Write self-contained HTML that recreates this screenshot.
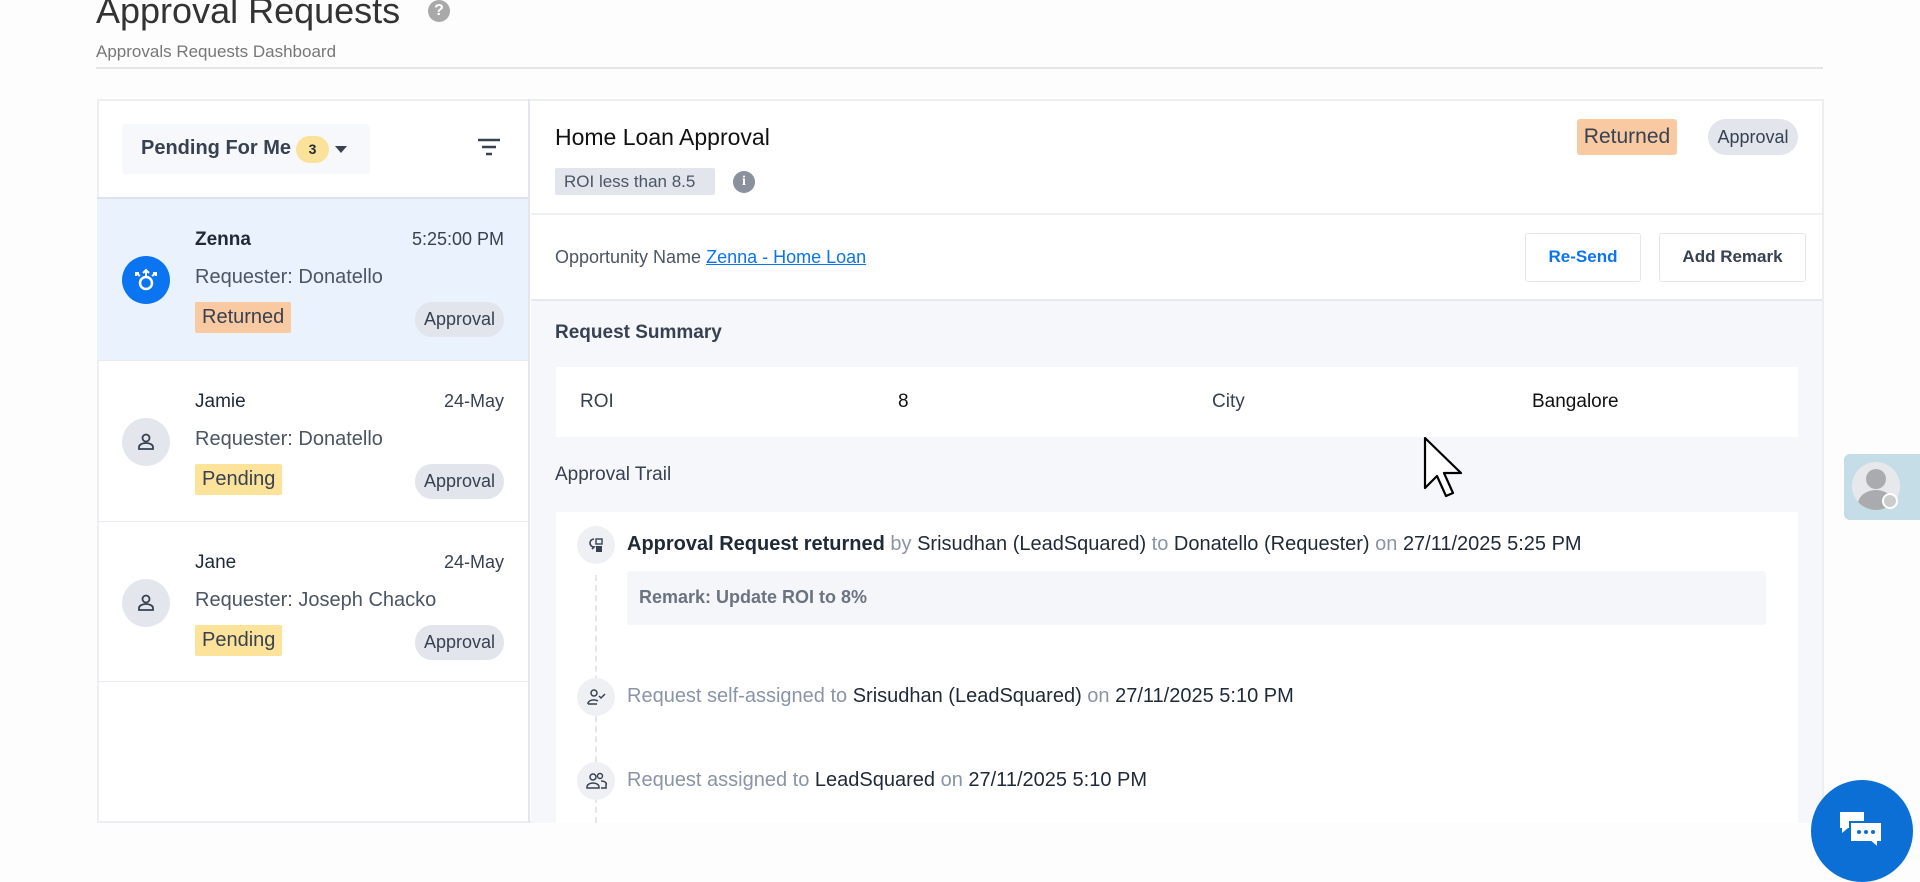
<!DOCTYPE html>
<html><head><meta charset="utf-8"><style>
*{box-sizing:border-box;margin:0;padding:0}
body{width:1920px;height:866px;overflow:hidden;background:#fdfdfd;font-family:"Liberation Sans",sans-serif;color:#1f2937;position:relative}
.a{position:absolute}
.title{left:96px;top:-10px;font-size:36px;color:#333}
.sub{left:96px;top:42px;font-size:17px;color:#777}
.sep{left:96px;top:67px;width:1727px;height:2px;background:#e6e6e6}
.panel{left:97px;top:99px;width:1727px;height:724px;border:2px solid #eceef2;background:#fff}
.left{left:97px;top:99px;width:433px;height:724px;border-right:2px solid #e3e6ec}
.item{position:absolute;left:0;width:431px;border-bottom:1px solid #e8eaee}
.av{position:absolute;left:25px;top:57px;width:48px;height:48px;border-radius:50%;background:#e3e6ec}
.nm{position:absolute;left:98px;top:30px;font-size:19px;color:#1f2937}
.tm{position:absolute;right:24px;top:30px;font-size:18px;color:#374151}
.rq{position:absolute;left:98px;top:67px;font-size:20px;color:#4b5563}
.st{position:absolute;left:98px;top:103px;font-size:20px;padding:4px 7px;border-radius:2px;color:#374151}
.ap{position:absolute;right:24px;top:103px;font-size:18px;padding:7px 9px;border-radius:17px;background:#e2e5ec;color:#374151}
.tl{position:absolute;left:577px;width:38px;height:38px;border-radius:50%;background:#eef0f4}
.tx{position:absolute;left:627px;font-size:20px;color:#8a94a6;white-space:nowrap}
.tx b{color:#1f2937;font-weight:normal}
</style></head><body>
<div class="a title">Approval Requests</div>
<div class="a" style="left:428px;top:0px;width:22px;height:22px;border-radius:50%;background:#a9a9a9;color:#fff;font-size:16px;font-weight:bold;text-align:center;line-height:22px">?</div>
<div class="a sub">Approvals Requests Dashboard</div>
<div class="a sep"></div>
<div class="a panel"></div>
<div class="a left">
 <div class="a" style="left:25px;top:25px;width:248px;height:50px;background:#f7f8fb;border-radius:3px"></div>
 <div class="a" style="left:44px;top:38px;font-size:20px;font-weight:bold;color:#374151">Pending For Me</div>
 <div class="a" style="left:199px;top:37px;width:33px;height:27px;border-radius:14px;background:#fbe29a;font-size:14px;font-weight:bold;text-align:center;line-height:27px">3</div>
 <div class="a" style="left:238px;top:47px;border-left:6px solid transparent;border-right:6px solid transparent;border-top:7px solid #374151"></div>
 <svg class="a" style="left:379px;top:38px" width="26" height="20"><path d="M2 3h22M6 10h14M10 17h6" stroke="#374151" stroke-width="2.4"/></svg>
 <div class="a" style="left:0;top:98px;width:431px;height:2px;background:#dfe3e9"></div>
 <div class="item" style="top:100px;height:162px;background:#eaf2fd">
  <div class="av" style="background:#0b74f0"><svg width="48" height="48"><circle cx="24" cy="27" r="6" stroke="#fff" stroke-width="2.5" fill="none"/><path d="M24 21v-7M21 17l3-3 3 3M18 20l-4-3M14 20v-3h3M30 20l4-3M34 20v-3h-3" stroke="#fff" stroke-width="2" fill="none"/></svg></div>
  <div class="nm" style="font-weight:bold">Zenna</div>
  <div class="tm">5:25:00 PM</div>
  <div class="rq">Requester: Donatello</div>
  <div class="st" style="background:#f9c9a2">Returned</div>
  <div class="ap">Approval</div>
 </div>
 <div class="item" style="top:262px;height:161px">
  <div class="av"><svg width="48" height="48"><circle cx="24" cy="20" r="3.5" stroke="#374151" stroke-width="1.8" fill="none"/><path d="M17 31v-2a7 4 0 0 1 14 0v2z" stroke="#374151" stroke-width="1.8" fill="none"/></svg></div>
  <div class="nm">Jamie</div>
  <div class="tm">24-May</div>
  <div class="rq">Requester: Donatello</div>
  <div class="st" style="background:#fde39a">Pending</div>
  <div class="ap">Approval</div>
 </div>
 <div class="item" style="top:423px;height:160px">
  <div class="av"><svg width="48" height="48"><circle cx="24" cy="20" r="3.5" stroke="#374151" stroke-width="1.8" fill="none"/><path d="M17 31v-2a7 4 0 0 1 14 0v2z" stroke="#374151" stroke-width="1.8" fill="none"/></svg></div>
  <div class="nm">Jane</div>
  <div class="tm">24-May</div>
  <div class="rq">Requester: Joseph Chacko</div>
  <div class="st" style="background:#fde39a">Pending</div>
  <div class="ap">Approval</div>
 </div>
</div>
<div class="a" style="left:555px;top:124px;font-size:23px;color:#111">Home Loan Approval</div>
<div class="a" style="left:555px;top:168px;width:160px;height:27px;background:#e2e5ec;border-radius:2px;font-size:17px;color:#4b5563;padding:4px 9px">ROI less than 8.5</div>
<div class="a" style="left:733px;top:171px;width:22px;height:22px;border-radius:50%;background:#8a919c;color:#fff;font-size:14px;font-weight:bold;text-align:center;line-height:22px;font-family:'Liberation Serif',serif">i</div>
<div class="a" style="left:1577px;top:119px;width:100px;height:36px;background:#f9c9a2;border-radius:3px;font-size:21px;color:#374151;text-align:center;line-height:36px">Returned</div>
<div class="a" style="left:1708px;top:119px;width:90px;height:36px;background:#e2e5ec;border-radius:18px;font-size:18px;color:#374151;text-align:center;line-height:36px">Approval</div>
<div class="a" style="left:531px;top:213px;width:1291px;height:2px;background:#eef0f4"></div>
<div class="a" style="left:555px;top:247px;font-size:18px;color:#4b5563">Opportunity Name <span style="color:#0b74f0;text-decoration:underline">Zenna - Home Loan</span></div>
<div class="a" style="left:1525px;top:233px;width:116px;height:49px;border:1.5px solid #e3e6ec;border-radius:3px;font-size:17px;font-weight:bold;color:#0b74f0;text-align:center;line-height:46px">Re-Send</div>
<div class="a" style="left:1659px;top:233px;width:147px;height:49px;border:1.5px solid #e3e6ec;border-radius:3px;font-size:17px;font-weight:bold;color:#374151;text-align:center;line-height:46px">Add Remark</div>
<div class="a" style="left:531px;top:299px;width:1291px;height:524px;background:#f6f7fb;border-top:2px solid #e6e8ed"></div>
<div class="a" style="left:555px;top:322px;font-size:19px;font-weight:bold;color:#374151">Request Summary</div>
<div class="a" style="left:556px;top:367px;width:1242px;height:70px;background:#fff"></div>
<div class="a" style="left:580px;top:391px;font-size:19px;color:#374151">ROI</div>
<div class="a" style="left:898px;top:391px;font-size:19px;color:#111">8</div>
<div class="a" style="left:1212px;top:391px;font-size:19px;color:#374151">City</div>
<div class="a" style="left:1532px;top:391px;font-size:19px;color:#111">Bangalore</div>
<div class="a" style="left:555px;top:464px;font-size:19px;color:#374151">Approval Trail</div>
<div class="a" style="left:556px;top:512px;width:1242px;height:311px;background:#fff"></div>
<div class="a" style="left:595px;top:575px;height:248px;border-left:2px dashed #e3e6ec"></div>
<div class="tl" style="top:526px"><svg width="38" height="38"><path d="M17 13a4 4 0 1 0 0 8l-2 2" stroke="#374151" stroke-width="1.6" fill="none"/><rect x="19" y="13" width="6" height="5" stroke="#374151" stroke-width="1.4" fill="none"/><rect x="19" y="20" width="6" height="6" fill="#374151"/></svg></div>
<div class="tx" style="top:533px"><b style="font-weight:bold">Approval Request returned</b> by <b>Srisudhan (LeadSquared)</b> to <b>Donatello (Requester)</b> on <b>27/11/2025 5:25 PM</b></div>
<div class="a" style="left:627px;top:571px;width:1139px;height:54px;background:#f5f6fa;border-radius:3px;font-size:18px;font-weight:bold;color:#6b7280;padding:16px 12px">Remark: Update ROI to 8%</div>
<div class="tl" style="top:678px"><svg width="38" height="38"><circle cx="17" cy="15" r="3" stroke="#374151" stroke-width="1.5" fill="none"/><path d="M11 26v-1a6 4 0 0 1 10-2M11 26h9M22 18l2 2 4-4" stroke="#374151" stroke-width="1.5" fill="none"/></svg></div>
<div class="tx" style="top:685px">Request self-assigned to <b>Srisudhan (LeadSquared)</b> on <b>27/11/2025 5:10 PM</b></div>
<div class="tl" style="top:762px"><svg width="38" height="38"><circle cx="16" cy="15" r="3" stroke="#374151" stroke-width="1.5" fill="none"/><circle cx="23" cy="14" r="2.5" stroke="#374151" stroke-width="1.4" fill="none"/><path d="M10 26v-1a6 4 0 0 1 12 0v1zM24 19a5 3 0 0 1 5 4v3h-5" stroke="#374151" stroke-width="1.5" fill="none"/></svg></div>
<div class="tx" style="top:769px">Request assigned to <b>LeadSquared</b> on <b>27/11/2025 5:10 PM</b></div>
<svg class="a" style="left:1422px;top:435px" width="40" height="64"><path d="M3 3v50l12-12 9 20 7-3-9-20h17z" fill="#fff" stroke="#000" stroke-width="2.2" stroke-linejoin="round"/></svg>
<div class="a" style="left:1844px;top:454px;width:80px;height:66px;background:#c4dde6;border-radius:6px 0 0 6px"></div>
<div class="a" style="left:1852px;top:462px;width:48px;height:48px;border-radius:50%;background:#e6e8ec;overflow:hidden"><div class="a" style="left:14px;top:7px;width:20px;height:20px;border-radius:50%;background:#a9abaf"></div><div class="a" style="left:6px;top:28px;width:36px;height:28px;border-radius:50%;background:#a9abaf"></div></div>
<div class="a" style="left:1882px;top:493px;width:16px;height:16px;border-radius:50%;background:#ccc;border:2px solid #fff"></div>
<div class="a" style="left:1811px;top:780px;width:102px;height:102px;border-radius:50%;background:#0c6fd6"></div>
<svg class="a" style="left:1836px;top:808px" width="54" height="46"><path d="M4 4h24v16H12l-6 5v-5H4z" fill="#fff"/><path d="M14 14h32v20h-4v6l-7-6H14z" fill="#fff" stroke="#0c6fd6" stroke-width="2"/><circle cx="23" cy="24" r="2" fill="#0c6fd6"/><circle cx="30" cy="24" r="2" fill="#0c6fd6"/><circle cx="37" cy="24" r="2" fill="#0c6fd6"/></svg>
</body></html>
